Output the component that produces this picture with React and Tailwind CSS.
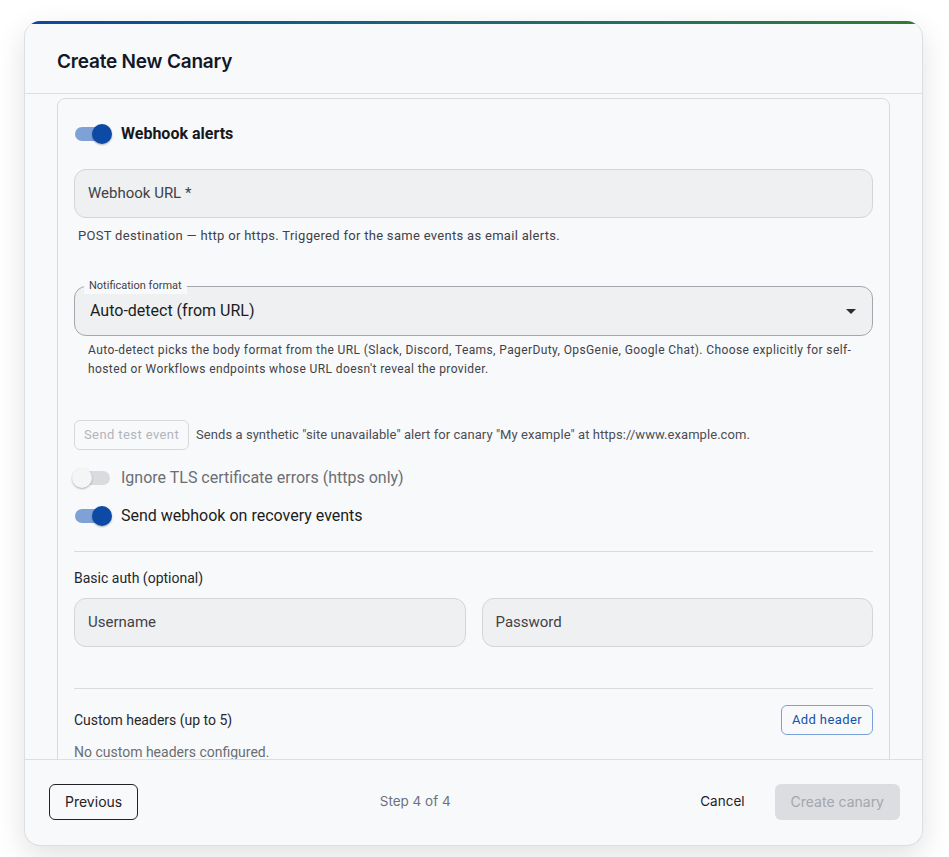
import React from "react";

const Toggle = ({ on }) => (
  <div className="relative w-[38px] h-5 shrink-0">
    <div
      className={`absolute left-[1px] right-[2px] top-[3px] h-[14px] rounded-full ${
        on ? "bg-[#7ea2d6]" : "bg-[#d9dbde]"
      }`}
    />
    <div
      className={`absolute top-0 w-5 h-5 rounded-full shadow-[0_1px_2px_rgba(0,0,0,0.3)] ${
        on ? "right-0 bg-[#0c4aa6]" : "-left-[2px] bg-[#f5f5f5]"
      }`}
    />
  </div>
);

const TextField = ({ label }) => (
  <div className="h-[49px] w-full rounded-xl bg-[#eff0f2] border border-[#d3d5d9] flex items-center px-[13px] text-[15px] text-[#3f4247]">
    {label}
  </div>
);

export default function App() {
  return (
    <div className="w-full h-[857px] bg-white overflow-hidden font-['Roboto',sans-serif]">
      <div className="ml-[24px] mt-[21px] w-[899px] h-[825px] rounded-2xl bg-[#f8f9fb] border border-t-0 border-[#dcdee2] shadow-[0_10px_30px_rgba(0,0,0,0.12)] flex flex-col overflow-hidden">
        <div className="h-[3px] shrink-0 bg-gradient-to-r from-[#0d47a1] via-[#1b6a73] to-[#2e7d32]" />

        {/* header */}
        <div className="h-[70px] shrink-0 border-b border-[#dcdee2] px-8 pt-[26px]">
          <h2 className="font-['Inter',sans-serif] text-[19px] leading-6 font-semibold text-[#111827] tracking-[-0.2px]">
            Create New Canary
          </h2>
        </div>

        {/* scroll body */}
        <div className="flex-1 overflow-hidden px-8 pt-1">
          <div className="rounded-lg border border-[#d9dbdf] px-4 pt-4 pb-8">
            <div className="flex items-center h-[38px] gap-[9px]">
              <Toggle on />
              <span className="text-base font-bold text-[#16181c]">Webhook alerts</span>
            </div>

            <div className="mt-[16px]">
              <TextField label="Webhook URL *" />
            </div>
            <p className="mt-[9px] ml-1 text-[13px] leading-[18px] tracking-[0.3px] text-[#3f4247]">
              POST destination — http or https. Triggered for the same events as email alerts.
            </p>

            {/* select */}
            <div className="relative mt-[41px] h-[50px] rounded-xl bg-[#eff0f2] border border-[#a4a7ad] flex items-center pl-[15px] pr-[13px]">
              <span className="absolute -top-[9px] left-[9px] px-[5px] bg-[#f8f9fb] text-[11px] leading-4 text-[#3f4247]">
                Notification format
              </span>
              <span className="flex-1 text-base text-[#1b1d21]">Auto-detect (from URL)</span>
              <svg width="10" height="5" viewBox="0 0 10 5" className="mr-[3px]">
                <path d="M0 0L5 5L10 0Z" fill="#2b2d31" />
              </svg>
            </div>
            <p className="mt-[5px] mx-[14px] text-[12px] leading-[19px] tracking-[0.4px] text-[#3f4247]">
              Auto-detect picks the body format from the URL (Slack, Discord, Teams, PagerDuty, OpsGenie, Google Chat). Choose explicitly for self-hosted or Workflows endpoints whose URL doesn't reveal the provider.
            </p>

            <div className="mt-[41px] flex items-center gap-[7px]">
              <button className="h-[30px] px-[9px] rounded-md border border-[#d6d8dc] text-[13px] tracking-[0.4px] text-[#b2b5ba]">
                Send test event
              </button>
              <span className="text-[13px] tracking-[0.06px] text-[#4b4e53]">
                Sends a synthetic "site unavailable" alert for canary "My example" at https://www.example.com.
              </span>
            </div>

            <div className="mt-[9px] flex items-center h-[38px] gap-[9px]">
              <Toggle />
              <span className="text-base text-[#6b6e73]">Ignore TLS certificate errors (https only)</span>
            </div>
            <div className="flex items-center h-[38px] gap-[9px]">
              <Toggle on />
              <span className="text-base text-[#1b1d21]">Send webhook on recovery events</span>
            </div>

            <div className="mt-[16px] border-t border-[#d9dbdf]" />
            <p className="mt-[16px] text-sm leading-5 text-[#25272b]">Basic auth (optional)</p>
            <div className="mt-[10px] grid grid-cols-2 gap-4">
              <TextField label="Username" />
              <TextField label="Password" />
            </div>

            <div className="mt-[41px] border-t border-[#d9dbdf]" />
            <div className="mt-[16px] flex items-center justify-between">
              <span className="text-sm text-[#25272b]">Custom headers (up to 5)</span>
              <button className="h-[30px] px-[10px] rounded-md border border-[#7aa0d8] text-[13px] tracking-[0.4px] text-[#1452a8]">
                Add header
              </button>
            </div>
            <p className="mt-[7px] text-sm leading-5 text-[#6b6e73]">No custom headers configured.</p>
          </div>
        </div>

        {/* footer */}
        <div className="h-[86px] shrink-0 border-t border-[#dcdee2] pl-6 pr-[22px] pt-[24px] flex items-start font-['Inter',sans-serif] text-sm">
          <button className="h-9 px-[15px] rounded-md border border-[#1f2226] text-[#1f2226]">Previous</button>
          <div className="flex-1 h-9 flex items-center justify-center pl-1 text-[13.5px] text-[#6b7280]">Step 4 of 4</div>
          <button className="h-9 px-3 text-[13.5px] text-[#1f2226]">Cancel</button>
          <button className="ml-[18px] h-9 px-4 rounded-md bg-[#dcdde0] text-[#a3a6ab]">Create canary</button>
        </div>
      </div>
    </div>
  );
}
